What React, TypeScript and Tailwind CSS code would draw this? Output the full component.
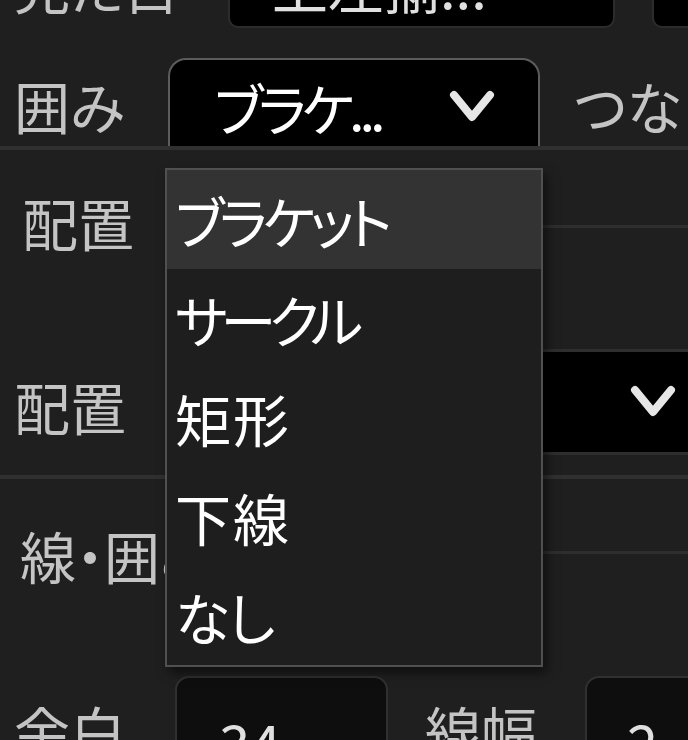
import React from 'react'

const font = "font-['Noto_Sans_CJK_JP','Noto_Sans_CJK_SC',sans-serif] [font-feature-settings:'palt']"

const Chevron = ({ className = '' }: { className?: string }) => (
  <svg viewBox="0 0 48 40" className={className} fill="none">
    <polyline
      points="6,8 24,30 42,8"
      stroke="#e6e6e6"
      strokeWidth="8"
      strokeLinecap="round"
      strokeLinejoin="round"
    />
  </svg>
)

const Label = ({ children, className = '' }: { children: React.ReactNode; className?: string }) => (
  <div className={`shrink-0 text-[56px] leading-none text-[#c4c4c4] whitespace-nowrap ${className}`}>{children}</div>
)

const options = [
  { text: 'ブラケット', cls: 'tracking-[-5px]' },
  { text: 'サークル', cls: 'tracking-[-7px]' },
  { text: '矩形', cls: 'tracking-[2px]' },
  { text: '下線', cls: 'tracking-[2px]' },
  { text: 'なし', cls: 'tracking-[-2px]' },
]

export default function App() {
  return (
    <div className={`relative w-[688px] h-[740px] overflow-hidden bg-[#1f1f1f] ${font}`}>
      <div className="flex flex-col">
        {/* row 1, mostly scrolled out */}
        <div className="-mt-[58px] h-[86px] flex items-center">
          <Label className="w-[228px] pl-[14px]">見た目</Label>
          <div className="shrink-0 w-[387px] h-full bg-black rounded-[10px] border-2 border-[#2c2c2c] flex items-center pl-[42px]">
            <span className="text-[56px] leading-none text-[#e0e0e0] whitespace-nowrap">上左揃...</span>
          </div>
          <div className="shrink-0 ml-[37px] w-[60px] h-full bg-black rounded-[10px] border-2 border-[#2c2c2c]" />
        </div>

        {/* row 2 */}
        <div className="mt-[30px] h-[88px] flex items-center">
          <Label className="w-[168px] pl-[14px] pt-[6px]">囲み</Label>
          <div className="shrink-0 w-[372px] h-full self-end bg-black border-[2.5px] border-b-0 border-[#5c5c5c] rounded-t-[18px] flex items-center justify-between pl-[44px] pr-[42px] pt-[8px]">
            <span className="text-[56px] leading-none text-white whitespace-nowrap tracking-[-5px]">ブラケ...</span>
            <Chevron className="w-[48px] h-[40px]" />
          </div>
          <Label className="ml-[34px] pt-[6px]">つなぎ線</Label>
        </div>
        <div className="h-[4px] bg-[#303030]" />

        {/* section 2 */}
        <div className="flex h-[325px]">
          <div className="shrink-0 w-[168px] flex flex-col">
            <Label className="pl-[22px] mt-[44px]">配置</Label>
            <Label className="pl-[14px] mt-[128px]">配置</Label>
          </div>
          <div className="flex-1 flex flex-col">
            <div className="h-[75px]" />
            <div className="h-[3px] bg-[#2e2e2e]" />
            <div className="h-[121px]" />
            <div className="h-[3px] bg-[#2e2e2e]" />
            <div className="h-[100px] bg-black flex items-center justify-end pr-[10px]">
              <Chevron className="w-[50px] h-[40px]" />
            </div>
            <div className="h-[3px] bg-[#2e2e2e]" />
          </div>
        </div>
        <div className="h-[4px] bg-[#303030]" />

        {/* section 3 */}
        <div className="flex h-[197px]">
          <div className="shrink-0 w-[168px]">
            <Label className="pl-[20px] mt-[48px]">線・囲み</Label>
          </div>
          <div className="flex-1 flex flex-col">
            <div className="h-[72px]" />
            <div className="h-[3px] bg-[#2e2e2e]" />
          </div>
        </div>

        {/* bottom row */}
        <div className="flex items-start h-[100px]">
          <Label className="w-[175px] pl-[14px] mt-[26px]">余白</Label>
          <div className="shrink-0 w-[213px] h-full bg-[#0e0e0e] border-2 border-[#303030] rounded-[14px] pl-[42px] pt-[36px]">
            <span className="text-[56px] leading-none text-[#e0e0e0]">34</span>
          </div>
          <Label className="ml-[37px] w-[160px] mt-[26px]">線幅</Label>
          <div className="shrink-0 w-[120px] h-full bg-[#0e0e0e] border-2 border-[#303030] rounded-[14px] pl-[40px] pt-[36px]">
            <span className="text-[56px] leading-none text-[#e0e0e0]">2</span>
          </div>
        </div>
      </div>

      {/* open dropdown */}
      <div className="absolute left-[165px] top-[168px] w-[378px] h-[499px] border-2 border-[#505050] bg-[#1e1e1e] shadow-[4px_6px_10px_rgba(0,0,0,0.5)] flex flex-col">
        {options.map((o, i) => (
          <div
            key={o.text}
            className={`h-[99px] flex items-center pl-[8px] text-[56px] leading-none text-white whitespace-nowrap ${o.cls} ${
              i === 0 ? 'bg-[#333333]' : ''
            }`}
          >
            {o.text}
          </div>
        ))}
      </div>
    </div>
  )
}
